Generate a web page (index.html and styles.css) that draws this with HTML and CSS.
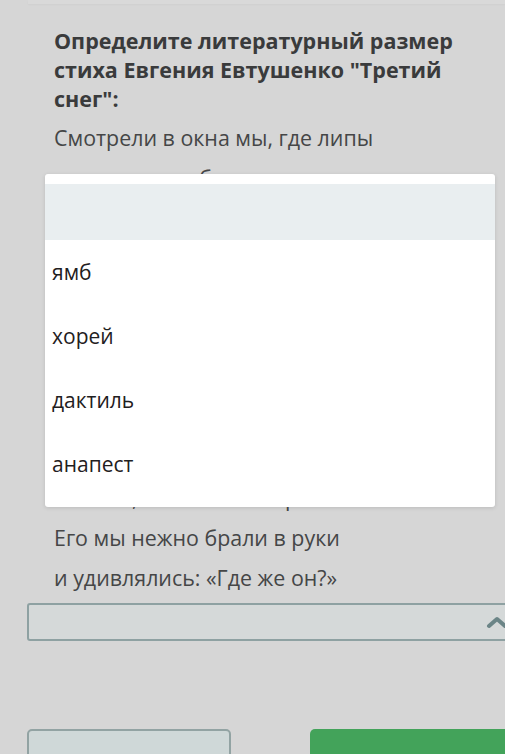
FILE: index.html
```html
<!DOCTYPE html>
<html lang="ru">
<head>
<meta charset="utf-8">
<link rel="stylesheet" href="styles.css">
</head>
<body>
<div class="page">
  <div class="top-edge"></div>
  <div class="question">
    <h2 class="title">Определите литературный размер стиха Евгения Евтушенко "Третий снег":</h2>
    <div class="poem">
      <p>Смотрели в окна мы, где липы</p>
      <p>чернели в глубине двора.</p>
      <p>Вздыхали: снова снег не выпал,</p>
      <p>а ведь пора ему, пора.</p>
      <p>И снег пошёл, пошёл под вечер,</p>
      <p>недолгий, тихий, невесомый.</p>
      <p>Он шёл, как будто очень ждал,</p>
      <p>чтоб мы его сейчас узнали.</p>
      <p>Но тот был снег какой-то скромный,</p>
      <p>он таял, землю не покрыв.</p>
      <p>Его мы нежно брали в руки</p>
      <p>и удивлялись: «Где же он?»</p>
    </div>
    <div class="select">
      <svg class="chevron" width="22" height="14" viewBox="0 0 22 14"><path d="M3 11 L11 4 L19 11" fill="none" stroke="#6b8587" stroke-width="4" stroke-linecap="round" stroke-linejoin="round"/></svg>
    </div>
  </div>
  <div class="actions">
    <button class="btn btn-outline">Назад</button>
    <button class="btn btn-green">Далее</button>
  </div>
  <ul class="menu">
    <li class="menu-item active"></li>
    <li class="menu-item">ямб</li>
    <li class="menu-item">хорей</li>
    <li class="menu-item">дактиль</li>
    <li class="menu-item">анапест</li>
  </ul>
</div>
</body>
</html>
```
FILE: styles.css
```css
html, body {
  margin: 0;
  padding: 0;
  background: #d6d6d6;
  overflow: hidden;
}
.page {
  position: relative;
  width: 505px;
  height: 754px;
  overflow: hidden;
  font-family: "Open Sans", "Noto Sans", sans-serif;
}
.top-edge {
  height: 4px;
  margin: 0 0 0 28px;
  background: #d9d9d9;
  box-shadow: 0 1px 2px rgba(0,0,0,0.03);
}
.question {
  padding: 22px 0 0 27px;
}
.title {
  margin: 0 0 5px 27px;
  font-size: 21.5px;
  line-height: 29px;
  font-weight: 700;
  color: #3a3b3c;
  width: 420px;
}
.poem {
  margin-left: 27px;
}
.poem p {
  margin: 0;
  font-size: 21.4px;
  line-height: 40px;
  color: #454647;
  white-space: nowrap;
}
.select {
  margin-top: 5px;
  width: 485px;
  height: 34px;
  border: 2px solid #8ea1a2;
  border-radius: 3px;
  background: #d5d9d9;
  display: flex;
  justify-content: flex-end;
  align-items: center;
}
.chevron {
  margin-right: 6px;
}
.actions {
  display: flex;
  gap: 79px;
  padding: 88px 0 0 27px;
}
.btn {
  height: 60px;
  border-radius: 5px;
  font-family: "Open Sans", sans-serif;
  font-size: 18px;
  padding: 30px 0 0;
  flex-shrink: 0;
}
.btn-outline {
  width: 204px;
  border: 2px solid #92a3a3;
  background: #cfd8d8;
  color: #6b8587;
}
.btn-green {
  width: 220px;
  border: none;
  background: #43a35a;
  color: #ffffff;
}
.menu {
  position: absolute;
  left: 45px;
  top: 174px;
  width: 450px;
  height: 333px;
  margin: 0;
  padding: 10px 0 0;
  box-sizing: border-box;
  list-style: none;
  background: #ffffff;
  border-radius: 3px;
  box-shadow: 0 1px 4px rgba(0,0,0,0.12);
}
.menu-item {
  height: 64px;
  display: flex;
  align-items: center;
  padding-left: 7px;
  font-size: 21px;
  color: #1f2021;
}
.menu-item.active {
  height: 56px;
  background: #e9eef0;
}
```
